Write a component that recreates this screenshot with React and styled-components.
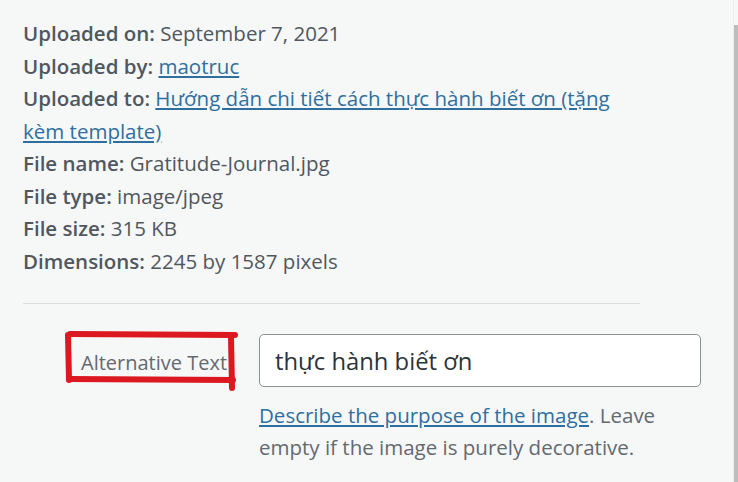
import styled, { createGlobalStyle } from "styled-components";

const GlobalStyle = createGlobalStyle`
  html, body {
    margin: 0;
    padding: 0;
    background: #f6f7f7;
  }
  body {
    font-family: "Segoe UI", "Open Sans", "Noto Sans", sans-serif;
  }
`;

const Frame = styled.div`
  display: flex;
  width: 738px;
  height: 482px;
  overflow: hidden;
  background: #f6f7f7;
`;

const Panel = styled.div`
  flex: 1;
  padding: 17px 0 0 23px;
  border-right: 1px solid #eceeee;
`;

const Scrollbar = styled.div`
  width: 4px;
  margin-top: 25px;
  background: #bdbdbd;
`;

const Details = styled.div`
  width: 617px;
  font-size: 20.5px;
  line-height: 32.5px;
  color: #50575e;
  padding-bottom: 26px;
  border-bottom: 1px solid #dcdcde;
`;

const Row = styled.div``;

const Label = styled.strong`
  font-weight: 600;
`;

const Link = styled.a`
  color: #2f6f9f;
  text-decoration: underline;
  text-underline-offset: 2px;
`;

const Setting = styled.div`
  display: flex;
  align-items: flex-start;
  margin-top: 30px;
`;

const FieldLabel = styled.label`
  position: relative;
  width: 236px;
  box-sizing: border-box;
  padding: 14px 0 0 58px;
  font-size: 20px;
  line-height: 30px;
  color: #646970;
  white-space: nowrap;
`;

const Marker = styled.svg`
  position: absolute;
  left: 42px;
  top: -3px;
  overflow: visible;
`;

const Field = styled.div`
  width: 442px;
`;

const Input = styled.input`
  width: 100%;
  height: 53px;
  box-sizing: border-box;
  padding: 0 15px;
  border: 1px solid #8c8f94;
  border-radius: 5px;
  background: #fff;
  font-family: inherit;
  font-size: 23.8px;
  color: #2c3338;
`;

const Help = styled.p`
  margin: 12px 0 0;
  padding-right: 30px;
  font-size: 20.5px;
  line-height: 32px;
  color: #646970;
`;

export default function App() {
  return (
    <Frame>
      <GlobalStyle />
      <Panel>
        <Details>
          <Row>
            <Label>Uploaded on:</Label> September 7, 2021
          </Row>
          <Row>
            <Label>Uploaded by:</Label> <Link href="#">maotruc</Link>
          </Row>
          <Row>
            <Label>Uploaded to:</Label>{" "}
            <Link href="#">
              Hướng dẫn chi tiết cách thực hành biết ơn (tặng kèm template)
            </Link>
          </Row>
          <Row>
            <Label>File name:</Label> Gratitude-Journal.jpg
          </Row>
          <Row>
            <Label>File type:</Label> image/jpeg
          </Row>
          <Row>
            <Label>File size:</Label> 315 KB
          </Row>
          <Row>
            <Label>Dimensions:</Label> 2245 by 1587 pixels
          </Row>
        </Details>
        <Setting>
          <FieldLabel htmlFor="alt">
            <Marker width="174" height="62" viewBox="0 0 174 62">
              <g
                fill="none"
                stroke="#dc1820"
                strokeWidth="6"
                strokeLinecap="round"
              >
                <path d="M5 3 L170 4" />
                <path d="M3 4 L4 49" />
                <path d="M4 48 L168 49" />
                <path d="M166 6 L167 57" />
              </g>
            </Marker>
            Alternative Text
          </FieldLabel>
          <Field>
            <Input id="alt" defaultValue="thực hành biết ơn" />
            <Help>
              <Link href="#">Describe the purpose of the image</Link>. Leave
              empty if the image is purely decorative.
            </Help>
          </Field>
        </Setting>
      </Panel>
      <Scrollbar />
    </Frame>
  );
}
